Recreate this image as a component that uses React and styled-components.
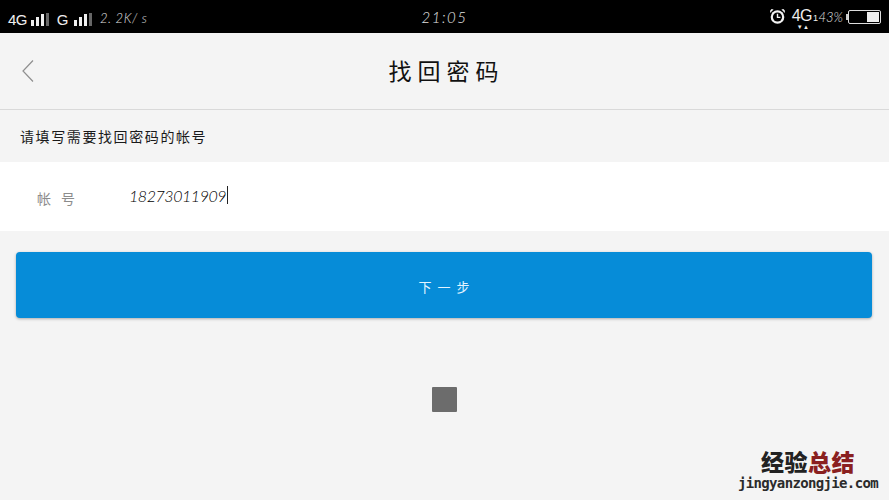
import styled, { createGlobalStyle } from 'styled-components';

const GlobalStyle = createGlobalStyle`
  html, body {
    margin: 0;
    padding: 0;
    background: #f4f4f4;
  }
  * {
    box-sizing: border-box;
  }
`;

const cjk = `"Noto Sans CJK SC", "Noto Sans", sans-serif`;

const Page = styled.div`
  position: relative;
  width: 889px;
  height: 500px;
  overflow: hidden;
  display: flex;
  flex-direction: column;
  background: #f4f4f4;
  font-family: ${cjk};
`;

const StatusBar = styled.div`
  height: 33px;
  flex: none;
  display: grid;
  grid-template-columns: 1fr auto 1fr;
  align-items: center;
  padding: 0 8px 0 8px;
  background: #000;
  color: #e8e8e8;
`;

const StatusLeft = styled.div`
  display: flex;
  align-items: center;
  padding-top: 2px;
`;

const StatusRight = styled.div`
  display: flex;
  align-items: center;
  justify-content: flex-end;
`;

const Network = styled.span`
  font: 15px "Liberation Sans", sans-serif;
  letter-spacing: -0.6px;
  color: #eee;
  margin-left: ${(p) => p.$gap || 0}px;
  margin-top: 3px;
`;

const Bars = styled.span`
  display: flex;
  align-items: flex-end;
  gap: 2px;
  height: 14px;
  margin-left: ${(p) => p.$gap || 4}px;
  margin-top: 2px;
`;

const Bar = styled.i`
  display: block;
  width: 3px;
  height: ${(p) => p.$h}px;
  background: ${(p) => (p.$dim ? '#666' : '#eee')};
`;

const Thin = styled.span`
  font: italic 300 ${(p) => p.$size || 13}px "Lato", sans-serif;
  letter-spacing: ${(p) => p.$track || 0}px;
  color: ${(p) => p.$color || '#e0e0e0'};
  margin-left: ${(p) => p.$gap || 0}px;
`;

const NetStack = styled.span`
  position: relative;
  display: flex;
  align-items: baseline;
  margin-left: 6px;
  margin-top: -2px;
  color: #eee;
  font: 16px "Liberation Sans", sans-serif;
  letter-spacing: -0.5px;
`;

const Sub = styled.span`
  font-size: 9px;
  margin-left: 1px;
`;

const Arrows = styled.span`
  position: absolute;
  left: 5px;
  bottom: -5px;
  font-size: 6px;
  line-height: 6px;
  letter-spacing: 0.5px;
`;

const Battery = styled.span`
  position: relative;
  display: flex;
  justify-content: flex-end;
  width: 33px;
  height: 14px;
  margin-left: 5px;
  padding: 1px;
  border: 1px solid #ddd;
  border-radius: 2px;

  &::before {
    content: '';
    position: absolute;
    left: -3px;
    top: 3px;
    width: 2px;
    height: 6px;
    background: #ccc;
  }
`;

const BatteryLevel = styled.span`
  display: block;
  width: 43%;
  background: #eee;
`;

const Header = styled.header`
  height: 77px;
  flex: none;
  display: flex;
  align-items: center;
  justify-content: center;
  position: relative;
  border-bottom: 1px solid #d9d9d9;
`;

const BackIcon = styled.svg`
  position: absolute;
  left: 21px;
  top: 26px;
`;

const Title = styled.h1`
  margin: 0;
  padding: 0 0 3px 4px;
  font-size: 23px;
  font-weight: 400;
  letter-spacing: 6px;
  color: #111;
`;

const Hint = styled.p`
  margin: 0;
  height: 52px;
  padding: 16px 0 0 20px;
  font-size: 14px;
  line-height: 20px;
  letter-spacing: 1.6px;
  color: #1a1a1a;
`;

const FieldRow = styled.div`
  height: 69px;
  flex: none;
  display: flex;
  align-items: center;
  padding: 0 0 0 37px;
  background: #fff;
`;

const FieldLabel = styled.span`
  width: 92px;
  font-size: 14px;
  letter-spacing: 10px;
  color: #8c8c8c;
  padding-top: 2px;
`;

const FieldValue = styled.span`
  display: flex;
  align-items: center;
  font: italic 300 16px "Lato", sans-serif;
  letter-spacing: -0.45px;
  color: #000;
  margin-top: -3px;
`;

const Caret = styled.i`
  display: block;
  width: 1px;
  height: 18px;
  margin-left: 1px;
  background: #222;
`;

const NextButton = styled.button`
  flex: none;
  height: 66px;
  margin: 21px 17px 0 16px;
  border: none;
  border-radius: 4px;
  background: #068cd8;
  box-shadow: 0 1px 3px rgba(0, 0, 0, 0.3);
  font-family: ${cjk};
  font-size: 13px;
  letter-spacing: 6px;
  color: #e4f4ff;
  padding: 3px 0 0 6px;
`;

const Spinner = styled.div`
  flex: none;
  align-self: center;
  width: 25px;
  height: 25px;
  margin-top: 69px;
  border-radius: 1px;
  background: #6c6c6c;
`;

const Watermark = styled.div`
  position: absolute;
  right: 11px;
  bottom: 9px;
  display: flex;
  flex-direction: column;
  align-items: center;
`;

const MarkTitle = styled.div`
  font-size: 23px;
  line-height: 27px;
  font-weight: 900;
  letter-spacing: 0.5px;
  color: #222;
`;

const MarkRed = styled.span`
  color: #8a2020;
`;

const MarkUrl = styled.div`
  font: 700 14px "DejaVu Sans Mono", monospace;
  line-height: 16px;
  letter-spacing: -0.65px;
  color: #2b2b2b;
`;

const App = () => {
  return (
    <Page>
      <GlobalStyle />
      <StatusBar>
        <StatusLeft>
          <Network>4G</Network>
          <Bars>
            <Bar $h={6} />
            <Bar $h={9} />
            <Bar $h={12} />
            <Bar $h={13} $dim />
          </Bars>
          <Network $gap={8}>G</Network>
          <Bars $gap={6}>
            <Bar $h={6} />
            <Bar $h={9} />
            <Bar $h={12} />
            <Bar $h={13} $dim />
          </Bars>
          <Thin $gap={8} $track={0.6}>2. 2K/ s</Thin>
        </StatusLeft>
        <Thin $size={15} $track={1.5}>21:05</Thin>
        <StatusRight>
          <svg width="17" height="17" viewBox="0 0 17 17">
            <circle cx="8.5" cy="9" r="6.8" fill="#f2f2f2" />
            <circle cx="8.5" cy="9" r="4.6" fill="#000" />
            <path d="M8.5 5.8V9.4H11.4" fill="none" stroke="#f2f2f2" strokeWidth="1.4" />
            <path d="M1 5L4.6 1.6L2.6 1Q.6 2.2 1 5ZM16 5L12.4 1.6L14.4 1Q16.4 2.2 16 5Z" fill="#f2f2f2" />
          </svg>
          <NetStack>
            4G<Sub>1</Sub>
            <Arrows>▼▲</Arrows>
          </NetStack>
          <Thin $gap={1} $size={13}>43%</Thin>
          <Battery>
            <BatteryLevel />
          </Battery>
        </StatusRight>
      </StatusBar>

      <Header>
        <BackIcon width="14" height="24" viewBox="0 0 14 24">
          <path d="M12 1.5L2 12L12 22.5" fill="none" stroke="#8f8f8f" strokeWidth="1.2" />
        </BackIcon>
        <Title>找回密码</Title>
      </Header>

      <Hint>请填写需要找回密码的帐号</Hint>

      <FieldRow>
        <FieldLabel>帐号</FieldLabel>
        <FieldValue>
          18273011909
          <Caret />
        </FieldValue>
      </FieldRow>

      <NextButton>下一步</NextButton>

      <Spinner />

      <Watermark>
        <MarkTitle>
          经验<MarkRed>总结</MarkRed>
        </MarkTitle>
        <MarkUrl>jingyanzongjie.com</MarkUrl>
      </Watermark>
    </Page>
  );
};

export default App;
